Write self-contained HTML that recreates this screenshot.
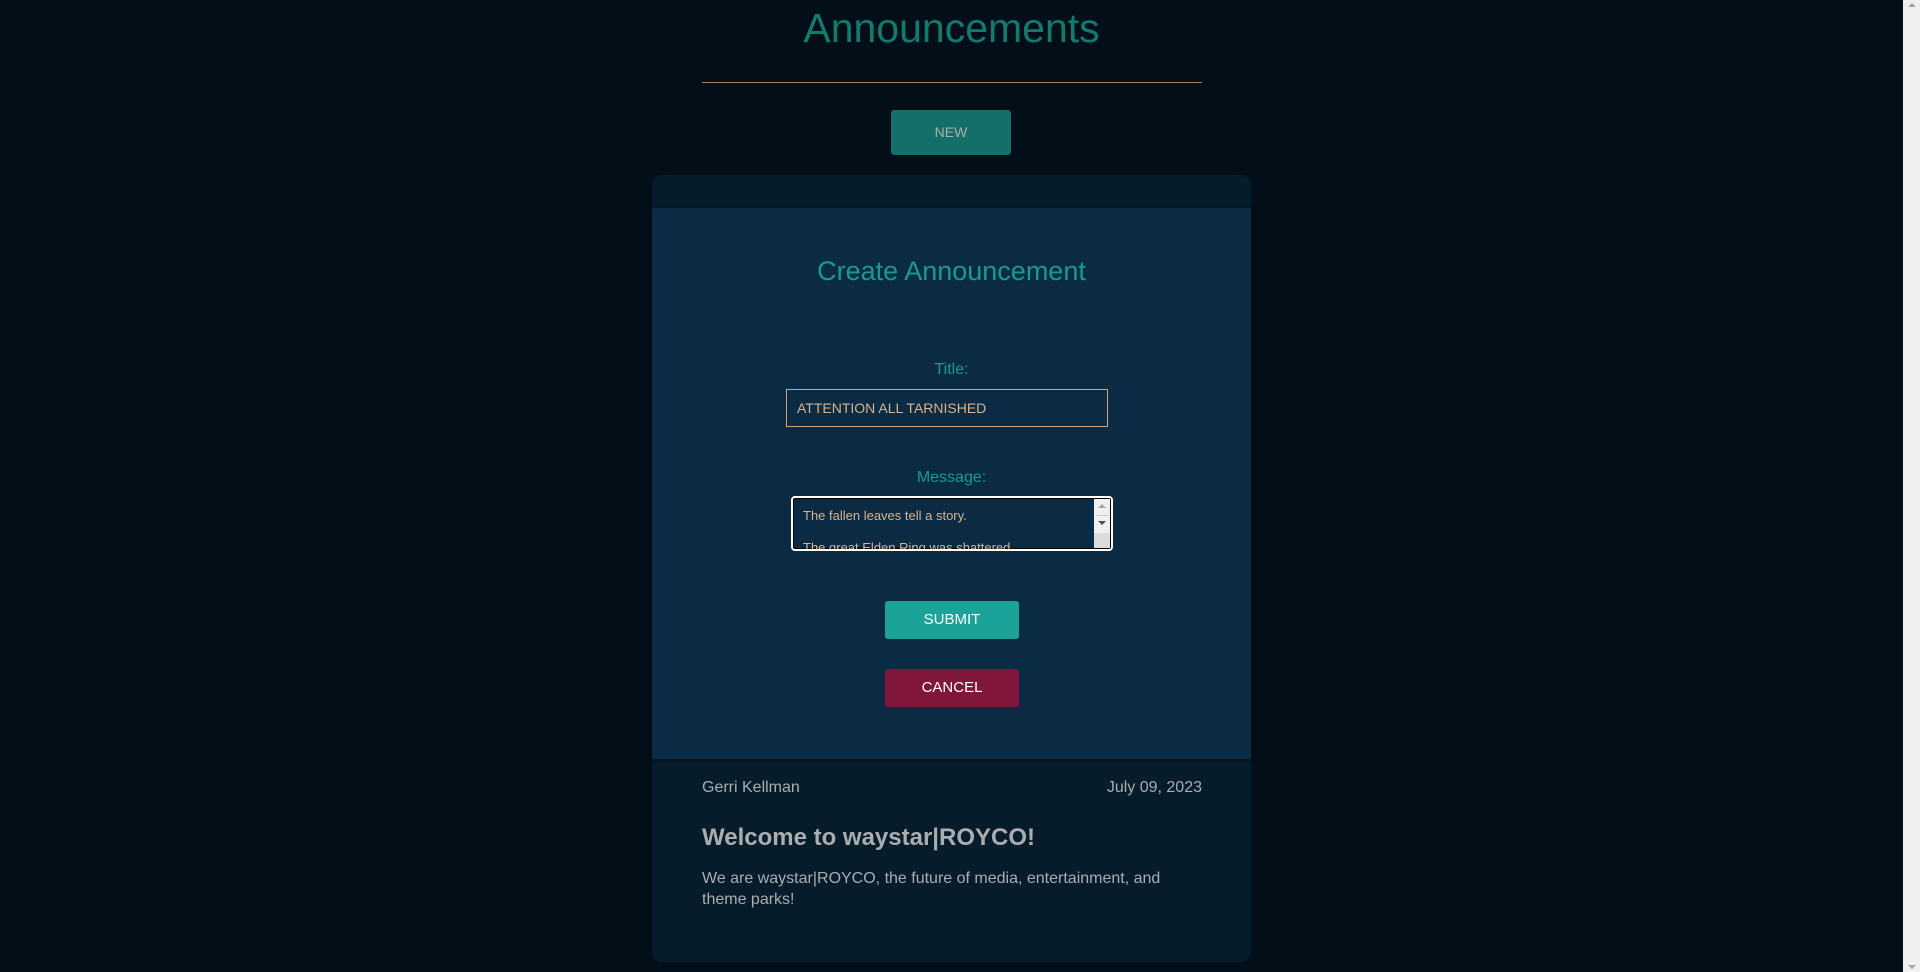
<!DOCTYPE html>
<html><head><meta charset="utf-8"><style>
*{box-sizing:border-box;margin:0;padding:0}
html,body{width:1920px;height:972px;overflow:hidden;background:#020f18;font-family:"Liberation Sans",sans-serif}
.sb{position:absolute;left:1903px;top:0;width:17px;height:972px;background:#f0f0f0}
.sb .u{position:absolute;left:5px;top:3px;border:4px solid transparent;border-bottom:4px solid #a3a3a3;border-top:0}
.sb .d{position:absolute;left:5px;bottom:3px;border:4px solid transparent;border-top:4px solid #a3a3a3;border-bottom:0}
.abs{position:absolute}
h1{position:absolute;left:0;width:1903px;top:2px;text-align:center;font-weight:300;font-size:41px;color:#137a6e;line-height:52px}
.hr{left:702px;top:82px;width:500px;height:1px;background:#a08060}
.new{left:891px;top:110px;width:120px;height:45px;background:#146f69;border-radius:3px;color:#a8b0ae;font-size:14px;text-align:center;line-height:45px}
.card{left:652px;top:175px;width:599px;height:787px;background:#071c2b;border-radius:10px;overflow:hidden}
.panel{left:652px;top:208px;width:599px;height:551px;background:#0b2b45;box-shadow:0 2px 6px rgba(0,0,0,.4)}
.ct{left:652px;width:599px;top:256px;text-align:center;font-size:27px;color:#1a9a8c;font-weight:300}
.lbl{left:652px;width:599px;text-align:center;font-size:16px;color:#1a9a8c}
.inp{left:786px;top:389px;width:322px;height:38px;border:1px solid #d4a373;color:#d8b48a;font-size:14px;line-height:36px;padding-left:10px}
.ta{left:791px;top:496px;width:322px;height:55px;border:2px solid #fff;border-radius:4px;background:#0b2b45;overflow:hidden;box-shadow:inset 0 0 0 1px #000}
.ta .t{position:absolute;left:10px;top:2px;color:#d8b48a;font-size:13px;line-height:32px;white-space:nowrap}
.ta .s{position:absolute;right:1px;top:1px;width:16px;height:49px;background:#f0f0f0}
.ta .s .a1{position:absolute;left:4px;top:5px;border:4px solid transparent;border-bottom:4px solid #a3a3a3;border-top:0}
.ta .s .a2{position:absolute;left:4px;top:22px;border:4px solid transparent;border-top:4px solid #505050;border-bottom:0}
.ta .s .ln{position:absolute;left:2px;right:2px;top:16px;height:1px;background:#c8c8c8}
.ta .s .g{position:absolute;left:0;right:0;top:34px;bottom:0;background:#dcdcdc}
.btn{left:885px;width:134px;height:38px;border-radius:3px;color:#fff;font-size:15px;text-align:center;line-height:38px}
.g{color:#a9adb0}
</style></head><body>
<h1>Announcements</h1>
<div class="abs hr"></div>
<div class="abs new">NEW</div>
<div class="abs card"></div>
<div class="abs panel"></div>
<div class="abs ct">Create Announcement</div>
<div class="abs lbl" style="top:361px">Title:</div>
<div class="abs inp">ATTENTION ALL TARNISHED</div>
<div class="abs lbl" style="top:469px">Message:</div>
<div class="abs ta"><div class="t">The fallen leaves tell a story.<br>The great Elden Ring was shattered.</div><div class="s"><div class="a1"></div><div class="ln"></div><div class="a2"></div><div class="g"></div></div></div>
<div class="abs btn" style="top:601px;background:#1ba39a">SUBMIT</div>
<div class="abs btn" style="top:669px;background:#80173a">CANCEL</div>
<div class="abs g" style="left:702px;top:779px;font-size:16px">Gerri Kellman</div>
<div class="abs g" style="left:1000px;width:202px;text-align:right;top:779px;font-size:16px">July 09, 2023</div>
<div class="abs g" style="left:702px;top:824px;font-size:24px;font-weight:bold">Welcome to waystar|ROYCO!</div>
<div class="abs g" style="left:702px;top:868px;width:500px;font-size:16px;line-height:21px">We are waystar|ROYCO, the future of media, entertainment, and theme parks!</div>
<div class="sb"><div class="u"></div><div class="d"></div></div>
</body></html>
